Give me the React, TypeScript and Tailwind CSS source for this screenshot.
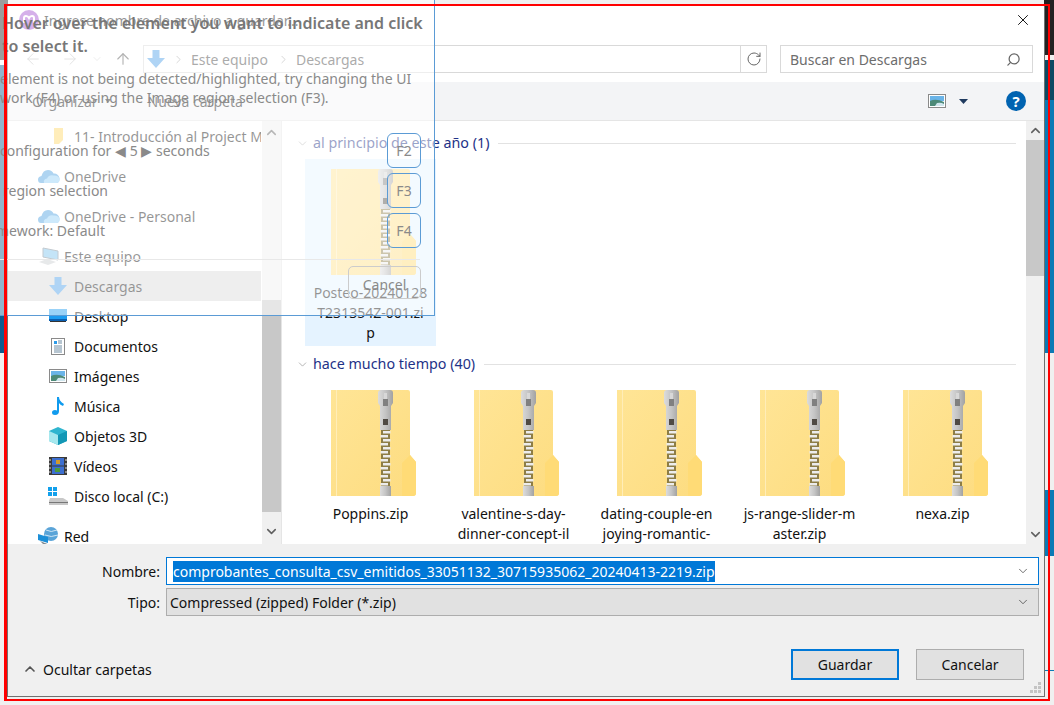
import { ArrowLeft, ArrowRight, ArrowUp, ChevronDown, ChevronRight, ChevronUp, RotateCw, Search, X } from "lucide-react";
import type { ReactNode } from "react";

const FONT = "font-['Noto_Sans','Open_Sans',sans-serif]";

// zip folder, the windows one with the zipper down the middle
const ZipFolder = () => (
  <svg width="85" height="106" viewBox="0 0 85 106" className="ml-[6px]">
    <defs>
      <linearGradient id="zipBody" x1="0" y1="0" x2="1" y2="1">
        <stop offset="0" stopColor="#ffe596" />
        <stop offset="1" stopColor="#fddc80" />
      </linearGradient>
      <linearGradient id="zipMetal" x1="0" y1="0" x2="1" y2="0">
        <stop offset="0" stopColor="#dcdcdc" />
        <stop offset="0.5" stopColor="#c4c4c4" />
        <stop offset="1" stopColor="#a2a2a2" />
      </linearGradient>
    </defs>
    <path d="M0 0H77Q79 0 79 2V65L85 72V103Q85 106 82 106H0Z" fill="url(#zipBody)" />
    <rect x="5" y="0" width="1" height="106" fill="#ffedb8" />
    <path d="M71 73L79 65L85 72V103Q85 106 82 106H71Z" fill="#ffdb76" />
    <path d="M47 3Q47 0 50 0H59Q62 0 62 3V13L60 16V40H49V16L47 13Z" fill="url(#zipMetal)" />
    <rect x="53" y="3" width="3" height="7" fill="#d8d8d8" />
    <rect x="52" y="9" width="5" height="7" fill="#808080" />
    <rect x="52" y="29" width="5" height="6" fill="#4f4a44" />
    <rect x="50" y="40" width="9" height="56" fill="#8d7d46" />
    {Array.from({ length: 14 }).map((_, i) => (
      <rect key={i} x={i % 2 ? 49.5 : 52} y={41 + i * 4} width="7.500" height="2.500" fill="#ececec" />
    ))}
    <rect x="49" y="96" width="11" height="10" fill="url(#zipMetal)" />
  </svg>
);

const Cloud = () => (
  <svg width="22" height="14" viewBox="0 0 22 14">
    <path d="M3 14Q0 14 0 10.500Q0 7.500 3.500 7Q5 1 10 1Q14 1 15.500 4.500Q20 4 21.500 9Q22 14 18 14Z" fill="#4a9fe0" />
    <path d="M6 14Q5 10 9 9.500Q11 5.500 15.500 6.500Q20 6 21.500 9.500Q22 14 18 14Z" fill="#8fcdf5" />
  </svg>
);

const ArrowDownBlue = ({ size = 18 }: { size?: number }) => (
  <svg width={size} height={size} viewBox="0 0 18 18">
    <path d="M5.500 0H12.500V8H18L9 18L0 8H5.500Z" fill="#4d9fe8" />
  </svg>
);

const Landscape = ({ w = 18, h = 14 }: { w?: number; h?: number }) => (
  <svg width={w} height={h} viewBox="0 0 18 14">
    <rect x="0.500" y="0.500" width="17" height="13" fill="#fff" stroke="#8a8a8a" />
    <rect x="2" y="2" width="14" height="5" fill="#6ab4e8" />
    <path d="M2 7Q8 4 16 8V12H2Z" fill="#4d8a78" />
    <path d="M9 9Q13 8 16 10V12H7Z" fill="#cfe6ee" />
  </svg>
);

const SIDE_ICONS: Record<string, ReactNode> = {
  folder: (
    <svg width="18" height="18" viewBox="0 0 18 18">
      <path d="M5 1H14V13L10 17H5Z" fill="#ffd766" />
    </svg>
  ),
  pc: (
    <svg width="20" height="18" viewBox="0 0 20 18">
      <path d="M4 1L19 4V13L4 10Z" fill="#7cc4ee" stroke="#7b8a96" />
      <path d="M0 15L8 12L17 15L9 18Z" fill="#c9cdd1" />
    </svg>
  ),
  desktop: (
    <svg width="18" height="14" viewBox="0 0 18 14">
      <rect width="18" height="12" fill="#1c9bf0" />
      <rect y="10" width="18" height="2" fill="#0a5fb0" />
      <rect x="1" y="12" width="16" height="1" fill="#333" />
    </svg>
  ),
  docs: (
    <svg width="14" height="17" viewBox="0 0 14 17">
      <rect x="0.500" y="0.500" width="13" height="16" fill="#fff" stroke="#8a8a8a" />
      <rect x="3" y="3" width="3" height="3" fill="#2c9be8" />
      <path d="M7 3H11M7 5H11M3 8H11M3 10H11M3 12H11M3 14H11" stroke="#6f8ca3" />
    </svg>
  ),
  images: <Landscape />,
  music: (
    <svg width="14" height="18" viewBox="0 0 14 18">
      <path d="M6 0H8Q8 4 13 7L12 9Q9 8 8 6V14Q8 18 4 18Q1 18 1 15.500Q1 13 4 13Q5 13 6 13.500Z" fill="#109bee" />
    </svg>
  ),
  cube: (
    <svg width="18" height="18" viewBox="0 0 18 18">
      <path d="M9 0L18 4V14L9 18L0 14V4Z" fill="#2fb5cf" />
      <path d="M0 4L9 8V18L0 14Z" fill="#a6e8ee" />
      <path d="M9 8L18 4V14L9 18Z" fill="#1397b5" />
    </svg>
  ),
  video: (
    <svg width="18" height="18" viewBox="0 0 18 18">
      <rect width="18" height="18" fill="#3a3a3a" />
      <rect x="3" y="1" width="12" height="7.500" fill="#3d6fd0" />
      <rect x="3" y="9.500" width="12" height="7.500" fill="#3d6fd0" />
      <rect x="7" y="3" width="4" height="4" fill="#d29a2c" />
      <rect x="6" y="11" width="5" height="4" fill="#4d9a3f" />
      <path d="M1 2V16M17 2V16" stroke="#ddd" strokeDasharray="2 2" />
    </svg>
  ),
  disk: (
    <svg width="20" height="18" viewBox="0 0 20 18">
      <path d="M0 0H4V4H0ZM5 0H9V4H5ZM0 5H4V9H0ZM5 5H9V9H5Z" fill="#12a0ec" />
      <path d="M2 11H15L20 14V18H1V14Z" fill="#c8c8c8" />
      <rect x="1" y="15" width="19" height="1" fill="#777" />
    </svg>
  ),
  net: (
    <svg width="22" height="18" viewBox="0 0 22 18">
      <circle cx="13" cy="7" r="7" fill="#5aa4d8" />
      <path d="M8 3Q13 6 19 3M7 8Q13 11 20 8" stroke="#cfe6f5" fill="none" />
      <path d="M0 7L10 10V16L0 13Z" fill="#1c8fd8" />
      <path d="M2 14L12 18L6 18Z" fill="#7f8a92" />
    </svg>
  ),
};

const SideRow = ({ icon, label, deep, active, mt }: { icon: ReactNode; label: string; deep?: boolean; active?: boolean; mt?: string }) => (
  <div className={`flex h-[30px] shrink-0 items-center whitespace-nowrap ${mt || ""} ${active ? "bg-[#d9d9d9]" : ""}`}>
    <div className={`flex shrink-0 items-center justify-center ${deep ? "ml-[40px] w-[20px] mr-[6px]" : "ml-[30px] w-[22px] mr-[4px]"}`}>{icon}</div>
    {label}
  </div>
);

const GroupHeader = ({ label, mt }: { label: string; mt: string }) => (
  <div className={`flex h-[20px] shrink-0 items-center pl-[14px] pr-[10px] text-[14.3px] text-[#1e3287] ${mt}`}>
    <ChevronDown size={13} strokeWidth={1} className="mr-[4px] text-[#777]" />
    <span className="whitespace-nowrap">{label}</span>
    <div className="ml-[9px] h-px flex-1 bg-[#e2e2e2]" />
  </div>
);

const ZipItem = ({ lines, selected }: { lines: string[]; selected?: boolean }) => (
  <div className={`flex w-[131px] shrink-0 flex-col items-center pt-[10px] pb-[3px] ${selected ? "bg-[#e5f3ff]" : ""}`}>
    <ZipFolder />
    <div className="mt-[8px] text-center leading-[20px] whitespace-nowrap">
      {lines.map((l) => (
        <div key={l}>{l}</div>
      ))}
    </div>
  </div>
);

const FKey = ({ label }: { label: string }) => (
  <div className="mr-[13px] mt-[2px] flex h-[35px] w-[34px] shrink-0 items-center justify-center rounded-[6px] border border-[#5b9bd5]">
    {label}
  </div>
);

const App = () => {
  return (
    <div className={`relative h-[705px] w-[1054px] overflow-hidden bg-[#f0f0f0] text-[14px] text-[#111] ${FONT}`}>
      {/* desktop windows behind the dialog */}
      <div className="absolute left-0 top-0 h-[60px] w-[8px] bg-[#222]" />
      <div className="absolute left-0 top-[60px] h-[5px] w-[8px] bg-white" />
      <div className="absolute left-0 top-[65px] h-[288px] w-[8px] bg-[#0b5b8e]" />
      <div className="absolute right-0 top-0 h-[55px] w-[10px] bg-[#222]" />
      <div className="absolute right-0 top-[55px] h-[5px] w-[10px] bg-[#f0f0f0]" />
      <div className="absolute right-0 top-[60px] h-[40px] w-[10px] bg-[#0c4a63]" />
      <div className="absolute right-0 top-[100px] h-[253px] w-[10px] bg-[#0a7ab5]" />
      <div className="absolute right-0 top-[490px] h-[66px] w-[10px] bg-[#0a7ab5]" />
      <div className="absolute right-0 top-[670px] h-px w-[10px] bg-[#0a7ab5]" />

      {/* save dialog */}
      <div className="absolute left-[7px] top-[5px] flex h-[692px] w-[1038px] flex-col border border-[#707070] bg-white">
        <div className="flex h-[28px] shrink-0 items-center pl-[11px] pr-[12px]">
          <svg width="20" height="20" viewBox="0 0 20 20" className="mr-[5px]">
            <circle cx="10" cy="10" r="10" fill="#a24fd0" />
            <path d="M5 13V8Q5 6 7 6Q9 6 10 8Q11 6 13 6Q15 6 15 8V13" stroke="#fff" strokeWidth="2" fill="none" />
          </svg>
          <span>Ingrese nombre de archivo a guardar...</span>
          <X size={18} strokeWidth={1.2} className="ml-auto text-black" />
        </div>

        <div className="mt-[11px] flex h-[28px] shrink-0 items-center pr-[11px]">
          <ArrowLeft size={18} strokeWidth={1.2} className="ml-[16px] text-[#bbb]" />
          <ArrowRight size={18} strokeWidth={1.2} className="ml-[19px] text-[#bbb]" />
          <ChevronDown size={12} strokeWidth={1.2} className="ml-[12px] text-[#bbb]" />
          <ArrowUp size={18} strokeWidth={1.5} className="ml-[11px] text-[#555]" />
          <div className="ml-[11px] flex h-[28px] w-[624px] items-center border border-[#d9d9d9] text-[#444]">
            <div className="ml-[3px]">
              <ArrowDownBlue />
            </div>
            <ChevronRight size={13} strokeWidth={1.2} className="ml-[7px] text-[#777]" />
            <span className="ml-[6px]">Este equipo</span>
            <ChevronRight size={13} strokeWidth={1.2} className="ml-[9px] text-[#777]" />
            <span className="ml-[6px]">Descargas</span>
            <div className="ml-auto flex h-full w-[26px] items-center justify-center border-l border-[#d9d9d9]">
              <RotateCw size={16} strokeWidth={1.5} className="text-[#666]" />
            </div>
          </div>
          <div className="ml-auto flex h-[28px] w-[253px] items-center justify-between border border-[#d9d9d9] pl-[9px] pr-[11px] text-[#6d6d6d]">
            Buscar en Descargas
            <Search size={15} strokeWidth={2} className="-scale-x-100 text-[#666]" />
          </div>
        </div>

        <div className="mt-[9px] flex h-[39px] shrink-0 items-center border-b border-[#e5e5e5] bg-[#f3f4f6] pr-[18px]">
          <span className="ml-[24px]">Organizar</span>
          <svg width="6" height="4" viewBox="0 0 6 4" className="ml-[7px]">
            <path d="M0 0H6L3 4Z" fill="#222" />
          </svg>
          <span className="ml-[37px]">Nueva carpeta</span>
          <div className="ml-auto">
            <Landscape />
          </div>
          <svg width="9" height="5" viewBox="0 0 9 5" className="ml-[13px]">
            <path d="M0 0H9L4.500 5Z" fill="#1f3a5f" />
          </svg>
          <div className="ml-[38px] flex h-[20px] w-[20px] items-center justify-center rounded-full bg-[#0063b1] text-[15px] font-bold text-white">?</div>
        </div>

        <div className="flex h-[423px] shrink-0 overflow-hidden">
          <div className="flex w-[253px] shrink-0 flex-col overflow-hidden">
            <SideRow deep icon={SIDE_ICONS.folder} label="11- Introducción al Project Management y Agile" />
            <SideRow mt="mt-[10px]" icon={<Cloud />} label="OneDrive" />
            <SideRow mt="mt-[10px]" icon={<Cloud />} label="OneDrive - Personal" />
            <SideRow mt="mt-[10px]" icon={SIDE_ICONS.pc} label="Este equipo" />
            <SideRow deep active icon={<ArrowDownBlue />} label="Descargas" />
            <SideRow deep icon={SIDE_ICONS.desktop} label="Desktop" />
            <SideRow deep icon={SIDE_ICONS.docs} label="Documentos" />
            <SideRow deep icon={SIDE_ICONS.images} label="Imágenes" />
            <SideRow deep icon={SIDE_ICONS.music} label="Música" />
            <SideRow deep icon={SIDE_ICONS.cube} label="Objetos 3D" />
            <SideRow deep icon={SIDE_ICONS.video} label="Vídeos" />
            <SideRow deep icon={SIDE_ICONS.disk} label="Disco local (C:)" />
            <SideRow mt="mt-[10px]" icon={SIDE_ICONS.net} label="Red" />
          </div>

          <div className="ml-px flex w-[19px] shrink-0 flex-col items-center bg-[#f0f0f0]">
            <ChevronUp size={15} strokeWidth={2.5} className="mt-[4px] text-[#606060]" />
            <div className="mt-[3px] h-[157px] w-full" />
            <div className="h-[212px] w-full bg-[#c8c8c8]" />
            <ChevronDown size={15} strokeWidth={2.5} className="mt-[12px] text-[#606060]" />
          </div>
          <div className="w-px shrink-0 bg-[#e5e5e5]" />

          <div className="flex w-[744px] shrink-0 flex-col overflow-hidden pt-[12px]">
            <GroupHeader label="al principio de este año (1)" mt="" />
            <div className="mt-[6px] flex pl-[23px]">
              <ZipItem selected lines={["Posteo-20240128", "T231354Z-001.zi", "p"]} />
            </div>
            <GroupHeader label="hace mucho tiempo (40)" mt="mt-[8px]" />
            <div className="mt-[6px] flex gap-[12px] pl-[23px]">
              <ZipItem lines={["Poppins.zip"]} />
              <ZipItem lines={["valentine-s-day-", "dinner-concept-il"]} />
              <ZipItem lines={["dating-couple-en", "joying-romantic-"]} />
              <ZipItem lines={["js-range-slider-m", "aster.zip"]} />
              <ZipItem lines={["nexa.zip"]} />
            </div>
          </div>

          <div className="flex w-[18px] shrink-0 flex-col items-center bg-[#f0f0f0]">
            <ChevronUp size={15} strokeWidth={2.5} className="mt-[2px] text-[#606060]" />
            <div className="mt-[2px] h-[136px] w-full bg-[#c8c8c8]" />
            <ChevronDown size={15} strokeWidth={2.5} className="mt-auto mb-[2px] text-[#606060]" />
          </div>
        </div>

        <div className="relative flex flex-1 flex-col bg-[#f0f0f0] pl-[158px] pr-[5px] pt-[13px]">
          <div className="flex items-center">
            <span className="-ml-[65px] w-[59px] text-right">Nombre:</span>
            <div className="ml-[6px] flex h-[28px] flex-1 items-center border border-[#0078d7] bg-white pl-[6px] pr-[8px]">
              <span className="bg-[#0078d7] leading-[21px] text-white">comprobantes_consulta_csv_emitidos_33051132_30715935062_20240413-2219.zip</span>
              <ChevronDown size={14} strokeWidth={1.2} className="ml-auto text-[#333]" />
            </div>
          </div>
          <div className="mt-[3px] flex items-center">
            <span className="-ml-[65px] w-[59px] text-right">Tipo:</span>
            <div className="ml-[6px] flex h-[28px] flex-1 items-center border border-[#adadad] bg-[#e1e1e1] pl-[3px] pr-[8px]">
              Compressed (zipped) Folder (*.zip)
              <ChevronDown size={14} strokeWidth={1.2} className="ml-auto text-[#333]" />
            </div>
          </div>
          <div className="mt-[33px] -ml-[144px] flex items-center pr-[15px]">
            <div className="mt-[9px] flex items-center">
              <ChevronUp size={16} strokeWidth={2.5} className="text-[#555]" />
              <span className="ml-[5px]">Ocultar carpetas</span>
            </div>
            <div className="ml-auto flex h-[31px] w-[108px] items-center justify-center border-2 border-[#0078d7] bg-[#e1e1e1]">Guardar</div>
            <div className="ml-[17px] flex h-[31px] w-[108px] items-center justify-center border border-[#adadad] bg-[#e1e1e1]">Cancelar</div>
          </div>
          <svg width="12" height="12" viewBox="0 0 12 12" className="absolute bottom-[2px] right-[2px]">
            <path d="M8 0H11V3H8ZM4 4H7V7H4ZM8 4H11V7H8ZM0 8H3V11H0ZM4 8H7V11H4ZM8 8H11V11H8Z" fill="#c4c4c4" />
          </svg>
        </div>
      </div>

      {/* translucent indicator overlay */}
      <div className="absolute left-0 top-0 flex h-[316px] w-[435px] flex-col overflow-hidden border-b border-r border-[#5b9bd5] bg-white/55 text-[#8a8a8a]">
        <div className="ml-[2px] mt-[12px] whitespace-nowrap text-[16px] font-semibold leading-[23px] text-[#777]">
          Hover over the element you want to indicate and click
          <br />
          to select it.
        </div>
        <div className="mt-[11px] whitespace-nowrap leading-[19px]">
          element is not being detected/highlighted, try changing the UI
          <br />
          work (F4) or using the Image region selection (F3).
        </div>
        <div className="mt-[22px] flex h-[40px] items-center justify-between">
          <span className="mt-[2px] whitespace-nowrap">configuration for ◀ 5 ▶ seconds</span>
          <FKey label="F2" />
        </div>
        <div className="flex h-[40px] items-center justify-between">
          <span className="ml-[3px] mt-[2px]">region selection</span>
          <FKey label="F3" />
        </div>
        <div className="flex h-[40px] items-center justify-between">
          <span className="-ml-[4px] mt-[2px]">mework: Default</span>
          <FKey label="F4" />
        </div>
        <div className="mt-[10px] h-px w-[420px] bg-[#e8e8e8]" />
        <div className="mr-[13px] mt-[6px] flex h-[33px] w-[73px] items-center justify-center self-end rounded-[5px] border border-[#ccc] pt-[4px]">Cancel</div>
      </div>

      <div className="absolute left-[4px] top-[4px] h-[697px] w-[1046px] border-2 border-l-[3px] border-[#f00]" />
    </div>
  );
};

export default App;
